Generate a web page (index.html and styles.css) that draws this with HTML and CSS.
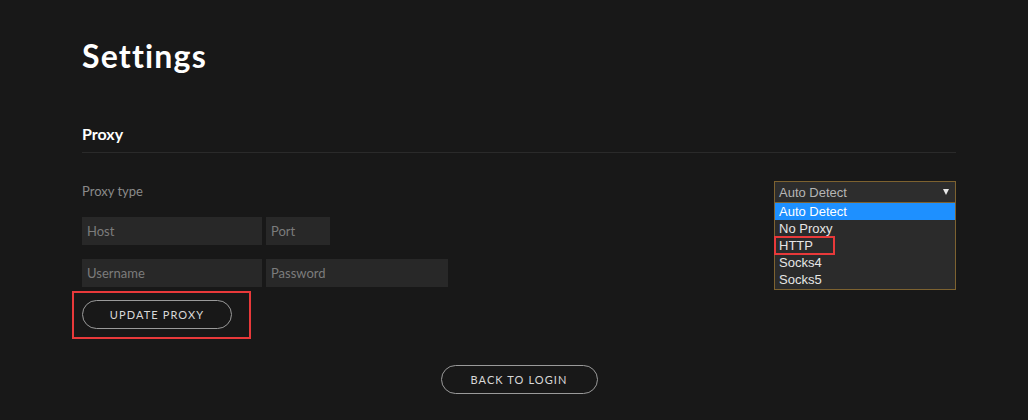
FILE: index.html
```html
<!DOCTYPE html>
<html>
<head>
<meta charset="utf-8">
<link rel="stylesheet" href="styles.css">
</head>
<body>
<div class="page">
  <h1 class="title">Settings</h1>
  <section class="section">
    <h2 class="section-title">Proxy</h2>
    <div class="type-row">
      <span class="label">Proxy type</span>
      <div class="select-wrap">
        <div class="select">
          <span>Auto Detect</span>
          <span class="caret"></span>
        </div>
        <ul class="options">
          <li class="opt active">Auto Detect</li>
          <li class="opt">No Proxy</li>
          <li class="opt http">HTTP</li>
          <li class="opt">Socks4</li>
          <li class="opt">Socks5</li>
        </ul>
      </div>
    </div>
    <div class="field-row">
      <div class="input wide">Host</div>
      <div class="input port">Port</div>
    </div>
    <div class="field-row second">
      <div class="input wide">Username</div>
      <div class="input pass">Password</div>
    </div>
    <div class="btn-row">
      <button class="btn update">UPDATE PROXY</button>
    </div>
  </section>
  <div class="back-row">
    <button class="btn back">BACK TO LOGIN</button>
  </div>
</div>
</body>
</html>
```
FILE: styles.css
```css
*, *::before, *::after { box-sizing: border-box; }
html, body {
  margin: 0;
  background: #181818;
  height: 100%;
}
body {
  font-family: "Lato", "Liberation Sans", sans-serif;
  color: #fff;
}
.page {
  width: 874px;
  margin-left: 82px;
  padding-top: 36px;
}
.title {
  margin: 0;
  font-size: 32px;
  line-height: 40px;
  font-weight: 700;
  letter-spacing: 1.2px;
}
.section {
  margin-top: 48px;
}
.section-title {
  margin: 0;
  font-size: 16px;
  font-weight: 700;
  line-height: 20px;
  padding-bottom: 8px;
  border-bottom: 1px solid #2a2a2a;
}
.type-row {
  display: flex;
  justify-content: space-between;
  align-items: flex-start;
  margin-top: 28px;
}
.label {
  color: #8a8a8a;
  font-size: 13px;
  line-height: 16px;
  margin-top: 2px;
}
.select-wrap {
  position: relative;
  width: 182px;
}
.select {
  height: 22px;
  border: 1px solid #7d6230;
  background: #2d2d2d;
  color: #b5b5b5;
  font-family: "Liberation Sans", Arial, sans-serif;
  font-size: 13px;
  display: flex;
  align-items: center;
  justify-content: space-between;
  padding: 0 6px 0 4px;
}
.caret {
  width: 0;
  height: 0;
  border-left: 3px solid transparent;
  border-right: 3px solid transparent;
  border-top: 6px solid #e8e8e8;
}
.options {
  position: absolute;
  top: 22px;
  left: 0;
  width: 182px;
  margin: 0;
  padding: 0 0 1px 0;
  list-style: none;
  background: #2b2b2b;
  border: 1px solid #7d6230;
  border-top: none;
  font-family: "Liberation Sans", Arial, sans-serif;
  font-size: 13px;
  color: #e6e6e6;
}
.opt {
  height: 17px;
  line-height: 17px;
  padding-left: 4px;
}
.opt.active {
  background: #1e90ff;
  color: #fff;
}
.opt.http {
  position: relative;
}
.opt.http::after {
  content: "";
  position: absolute;
  left: -1px;
  top: -1px;
  width: 61px;
  height: 19px;
  border: 2px solid #e8393a;
}
.field-row {
  display: flex;
  gap: 4px;
  margin-top: 14px;
}
.field-row.second {
  margin-top: 14px;
}
.input {
  height: 28px;
  background: #282828;
  color: #7c7c7c;
  font-size: 13px;
  line-height: 28px;
  padding-left: 5px;
}
.input.wide { width: 180px; }
.input.port { width: 64px; }
.input.pass { width: 182px; }
.btn-row {
  margin-top: 13px;
  position: relative;
  width: 150px;
}
.btn-row::after {
  content: "";
  position: absolute;
  left: -10px;
  top: -9px;
  width: 179px;
  height: 48px;
  border: 2px solid #e8393a;
}
.btn {
  background: transparent;
  border: 1px solid #9a9a9a;
  border-radius: 15px;
  color: #d8d8d8;
  font-family: "Lato", "Liberation Sans", sans-serif;
  font-size: 11px;
  letter-spacing: 1.1px;
  height: 29px;
  padding: 0;
  display: block;
}
.btn.update { width: 150px; }
.back-row {
  display: flex;
  justify-content: center;
  margin-top: 36px;
}
.btn.back { width: 157px; height: 29px; }
```
